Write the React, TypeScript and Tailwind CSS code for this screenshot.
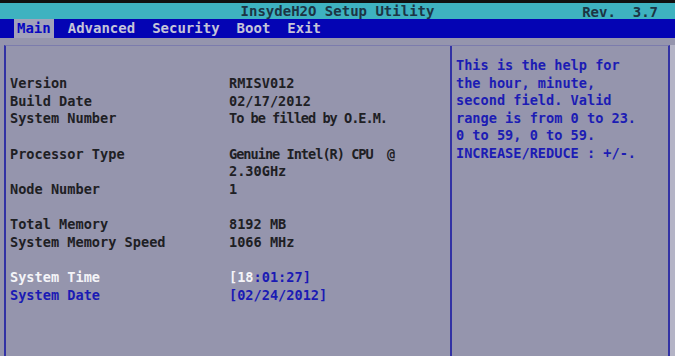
import React from "react";

const rows: ({ l: string; v: React.ReactNode; tight?: boolean } | null)[] = [
  { l: "Version", v: "RMISV012" },
  { l: "Build Date", v: "02/17/2012" },
  { l: "System Number", v: "To be filled by O.E.M.", tight: true },
  null,
  { l: "Processor Type", v: "Genuine Intel(R) CPU  @", tight: true },
  { l: "", v: "2.30GHz" },
  { l: "Node Number", v: "1" },
  null,
  { l: "Total Memory", v: "8192 MB" },
  { l: "System Memory Speed", v: "1066 MHz" },
  null,
];

const help = [
  "This is the help for",
  "the hour, minute,",
  "second field. Valid",
  "range is from 0 to 23.",
  "0 to 59, 0 to 59.",
  "INCREASE/REDUCE : +/-.",
];

export default function App() {
  return (
    <div
      className="w-[675px] h-[356px] overflow-hidden bg-[#9595ad] flex flex-col text-[13.6px] font-bold text-[#1e2024]"
      style={{ fontFamily: '"DejaVu Sans Mono", "Liberation Mono", monospace' }}
    >
      <div className="h-[3px] bg-[#101010]" />
      <div className="h-[16px] bg-[#3eb2c0] relative flex items-center justify-center leading-none text-[#1c3444] text-[14px]">
        <span className="font-bold">InsydeH2O Setup Utility</span>
        <span className="absolute right-[17px] top-[2px] font-bold whitespace-pre">Rev.  3.7</span>
      </div>
      <div className="h-[19px] bg-[#0404b4] flex items-stretch pl-[14px] gap-[11px] text-[#c4c4d8] text-[14px] leading-[19px]">
        <span className="bg-[#a2a2ba] text-[#0808c0] px-[3px]">Main</span>
        <span className="px-[3px]">Advanced</span>
        <span className="px-[3px]">Security</span>
        <span className="px-[3px]">Boot</span>
        <span className="px-[3px]">Exit</span>
      </div>
      <div className="flex-1 pt-[7px] flex">
        <div className="ml-[4px] w-[666px] flex border-t border-[#7c7cac] border-l-2 border-l-[#3232a4] border-r-2 border-r-[#3232a4]">
          <div className="w-[444px] pt-[29px] pl-[4px] leading-[17.67px]">
            <div className="grid grid-cols-[219px_1fr]">
              {rows.map((r, i) =>
                r === null ? (
                  <React.Fragment key={i}>
                    <div className="h-[17.67px]" />
                    <div className="h-[17.67px]" />
                  </React.Fragment>
                ) : (
                  <React.Fragment key={i}>
                    <div className="whitespace-pre">{r.l}</div>
                    <div className={r.tight ? "whitespace-pre tracking-[-1px]" : "whitespace-pre"}>{r.v}</div>
                  </React.Fragment>
                )
              )}
              <div className="text-[#f4f4f8]">System Time</div>
              <div className="text-[#1a1ab4]">
                <span className="text-[#f4f4f8]">[18</span>:01:27]
              </div>
              <div className="text-[#1a1ab4]">System Date</div>
              <div className="text-[#1a1ab4]">[02/24/2012]</div>
            </div>
          </div>
          <div className="flex-1 border-l-2 border-[#3232a4] pt-[11px] pl-[4px] leading-[17.6px] text-[#1c1cb4]">
            {help.map((h, i) => (
              <div key={i} className="whitespace-pre">
                {h}
              </div>
            ))}
          </div>
        </div>
        <div className="flex-1 bg-[#b4b4c6]" />
      </div>
    </div>
  );
}
